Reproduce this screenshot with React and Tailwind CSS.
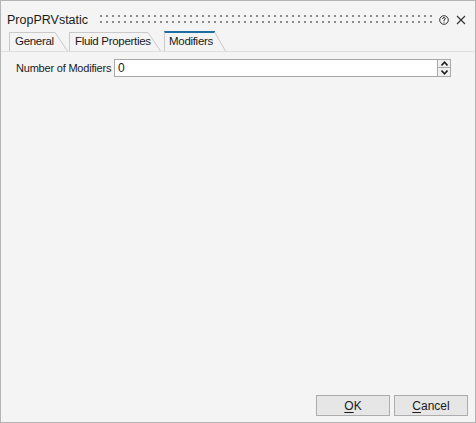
import React from 'react';

const font = { fontFamily: '"Liberation Sans", Arial, sans-serif' };

function Grip() {
    // dotted drag handle in title bar
    const cols = Array.from({ length: 56 });
    return (
        <svg width="334" height="10" className="block">
            {cols.map((_, i) => (
                <g key={i} fill="#8c8c8c">
                    <rect x={i * 6} y={0} width="2" height="2" />
                    <rect x={i * 6} y={6} width="2" height="2" />
                </g>
            ))}
        </svg>
    );
}

function Tab({ label, active, padLeft }) {
    return (
        <div className={`flex items-stretch ${active ? 'h-[20px]' : 'h-[19px]'}`}>
            <div
                className={`flex items-center whitespace-nowrap border-l border-[#c9c9c9] text-[11.5px] tracking-[-0.3px] text-[#1a1a1a] ${active ? 'border-t-2 border-t-[#1c6fa0]' : 'border-t'} ${padLeft}`}
            >
                {label}
            </div>
            <svg width="14" height={active ? 20 : 19} className="block">
                {active ? (
                    <>
                        <line x1="0" y1="1" x2="3" y2="1" stroke="#1c6fa0" strokeWidth="2" />
                        <line x1="2.5" y1="1" x2="13.5" y2="20" stroke="#c9c9c9" strokeWidth="1" />
                    </>
                ) : (
                    <>
                        <line x1="0" y1="0.5" x2="1" y2="0.5" stroke="#c9c9c9" strokeWidth="1" />
                        <line x1="1" y1="0.5" x2="13.5" y2="19" stroke="#c9c9c9" strokeWidth="1" />
                    </>
                )}
            </svg>
        </div>
    );
}

export default function App() {
    return (
        <div
            className="w-[476px] h-[423px] bg-[#f4f4f4] border border-[#b4b4b4] flex flex-col"
            style={font}
        >
            {/* title bar */}
            <div className="h-[30px] flex items-center pl-[6px] pr-[9px] pt-[8px]">
                <span className="text-[12.5px] text-[#1a1a1a] leading-none w-[93px] whitespace-nowrap">PropPRVstatic</span>
                <Grip />
                <div className="ml-auto flex items-center gap-[7px]">
                    <svg width="10" height="10" viewBox="0 0 10 10">
                        <circle cx="5" cy="5" r="4.3" fill="none" stroke="#333" strokeWidth="1" />
                        <path d="M3.6 3.9 Q3.7 2.6 5 2.6 Q6.4 2.6 6.3 3.8 Q6.2 4.6 5 5.1 L5 5.9" fill="none" stroke="#333" strokeWidth="1" />
                        <rect x="4.5" y="6.7" width="1" height="1" fill="#333" />
                    </svg>
                    <svg width="10" height="10" viewBox="0 0 10 10">
                        <path d="M1 1 L9 9 M9 1 L1 9" stroke="#333" strokeWidth="1.1" />
                    </svg>
                </div>
            </div>

            {/* tab strip */}
            <div className="h-[21px] flex items-end pl-[8px] border-b border-[#dedede]">
                <Tab label="General" padLeft="pl-[5px] w-[45px]" />
                <div className="w-[1px]" />
                <Tab label="Fluid Properties" padLeft="pl-[5px] w-[78px]" />
                <div className="w-[3px]" />
                <Tab label="Modifiers" active padLeft="pl-[4px] w-[48px]" />
            </div>

            {/* content */}
            <div className="flex-1 flex flex-col">
                <div className="flex items-center pt-[7px] pl-[15px]">
                    <span className="text-[11px] tracking-[-0.2px] text-[#1a1a1a] w-[98px] whitespace-nowrap">Number of Modifiers</span>
                    <div className="flex h-[18px]">
                        <div className="w-[324px] h-[18px] bg-white border border-[#a9a9a9] flex items-center pl-[3px] text-[12px] text-[#1a1a1a]">
                            0
                        </div>
                        <div className="w-[13px] h-[18px] flex flex-col border border-l-0 border-[#a9a9a9] bg-[#f0f0f0]">
                            <div className="h-[8px] flex items-center justify-center border-b border-[#a9a9a9]">
                                <svg width="7" height="5" viewBox="0 0 7 5">
                                    <path d="M0.5 4.5 L3.5 1.2 L6.5 4.5" fill="none" stroke="#222" strokeWidth="1.6" />
                                </svg>
                            </div>
                            <div className="flex-1 flex items-center justify-center">
                                <svg width="7" height="5" viewBox="0 0 7 5">
                                    <path d="M0.5 0.5 L3.5 3.8 L6.5 0.5" fill="none" stroke="#222" strokeWidth="1.6" />
                                </svg>
                            </div>
                        </div>
                    </div>
                </div>

                {/* buttons */}
                <div className="mt-auto flex justify-end gap-[4px] pr-[7px] pb-[6px]">
                    <button className="w-[74px] h-[21px] bg-[#e6e6e6] border border-[#adadad] text-[12px] text-[#1a1a1a]">
                        <span className="underline underline-offset-2">O</span>K
                    </button>
                    <button className="w-[74px] h-[21px] bg-[#e6e6e6] border border-[#adadad] text-[12px] text-[#1a1a1a]">
                        <span className="underline underline-offset-2">C</span>ancel
                    </button>
                </div>
            </div>
        </div>
    );
}
